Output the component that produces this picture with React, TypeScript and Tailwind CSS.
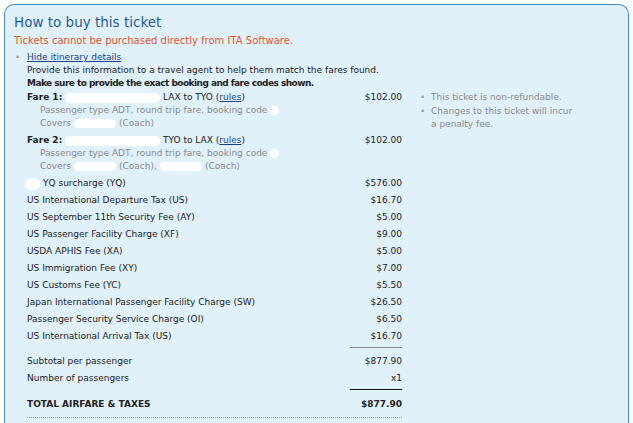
const font = { fontFamily: '"DejaVu Sans", Verdana, sans-serif' };

function Blob({ className }: { className: string }) {
  return <span className={`inline-block rounded-full bg-white align-middle ${className}`} />;
}

const taxes: [string, string][] = [
  ["US International Departure Tax (US)", "$16.70"],
  ["US September 11th Security Fee (AY)", "$5.00"],
  ["US Passenger Facility Charge (XF)", "$9.00"],
  ["USDA APHIS Fee (XA)", "$5.00"],
  ["US Immigration Fee (XY)", "$7.00"],
  ["US Customs Fee (YC)", "$5.50"],
  ["Japan International Passenger Facility Charge (SW)", "$26.50"],
  ["Passenger Security Service Charge (OI)", "$6.50"],
  ["US International Arrival Tax (US)", "$16.70"],
];

function Row({ label, amount, bold }: { label: React.ReactNode; amount: string; bold?: boolean }) {
  return (
    <div className={`flex h-[17px] items-center justify-between ${bold ? "font-bold" : ""}`}>
      <span>{label}</span>
      <span>{amount}</span>
    </div>
  );
}

export default function App() {
  return (
    <div className="h-[423px] w-[633px] overflow-hidden bg-white px-[4px] pt-[4px] text-[9px] text-[#222]" style={font}>
      <div className="h-[430px] rounded-t-[10px] border border-b-0 border-[#4a8ac6] bg-[#e1f1fa] pl-[9px] pt-[9px]">
        <h1 className="text-[13.5px] leading-[17px] text-[#1f5d9c]">How to buy this ticket</h1>
        <p className="mt-[3px] text-[10px] leading-[13px] text-[#e0572b]">Tickets cannot be purchased directly from ITA Software.</p>

        <div className="mt-[4px] flex items-center leading-[13px]">
          <span className="w-[13px] pl-[1px] text-[#999]">•</span>
          <a className="text-[#1a3e8c] underline">Hide itinerary details</a>
        </div>

        <div className="pl-[13px]">
          <p className="leading-[13px]">Provide this information to a travel agent to help them match the fares found.</p>
          <p className="font-bold leading-[13px] tracking-[-0.55px]">Make sure to provide the exact booking and fare codes shown.</p>

          <div className="mt-[1px] flex">
            <div className="w-[375px]">
              <div className="flex h-[13px] items-center justify-between">
                <span className="flex items-center">
                  <b className="w-[38px]">Fare 1:</b>
                  <Blob className="h-[10px] w-[95px]" />
                  <span className="ml-[3px]">LAX to TYO (<a className="text-[#1a3e8c] underline">rules</a>)</span>
                </span>
                <span>$102.00</span>
              </div>
              <div className="pl-[13px] leading-[13px] text-[#8a8a8a]">
                <div className="flex h-[13px] items-center">
                  Passenger type ADT, round trip fare, booking code
                  <Blob className="ml-[3px] h-[9px] w-[9px]" />
                </div>
                <div className="flex h-[13px] items-center">
                  Covers <Blob className="mx-[3px] h-[9px] w-[42px]" />(Coach)
                </div>
              </div>

              <div className="mt-[4px] flex h-[13px] items-center justify-between">
                <span className="flex items-center">
                  <b className="w-[38px]">Fare 2:</b>
                  <Blob className="h-[10px] w-[95px]" />
                  <span className="ml-[3px]">TYO to LAX (<a className="text-[#1a3e8c] underline">rules</a>)</span>
                </span>
                <span>$102.00</span>
              </div>
              <div className="pl-[13px] leading-[13px] text-[#8a8a8a]">
                <div className="flex h-[13px] items-center">
                  Passenger type ADT, round trip fare, booking code
                  <Blob className="ml-[3px] h-[9px] w-[9px]" />
                </div>
                <div className="flex h-[13px] items-center">
                  Covers <Blob className="mx-[3px] h-[9px] w-[42px]" />(Coach),
                  <Blob className="mx-[3px] h-[9px] w-[42px]" />(Coach)
                </div>
              </div>

              <div className="mt-[2px]">
                <Row
                  label={
                    <span className="flex items-center">
                      <Blob className="-ml-[2px] mr-[3px] h-[12px] w-[15px]" />YQ surcharge (YQ)
                    </span>
                  }
                  amount="$576.00"
                />
                {taxes.map(([l, a]) => (
                  <Row key={l} label={l} amount={a} />
                ))}
              </div>

              <div className="mt-[2px] flex justify-end">
                <div className="h-px w-[52px] bg-[#888]" />
              </div>
              <div className="mt-[5px]">
                <Row label="Subtotal per passenger" amount="$877.90" />
                <Row label="Number of passengers" amount="x1" />
              </div>
              <div className="mt-[2px] flex justify-end">
                <div className="h-px w-[52px] bg-[#111]" />
              </div>
              <div className="mt-[6px]">
                <Row label="TOTAL AIRFARE & TAXES" amount="$877.90" bold />
              </div>
              <div className="mt-[4px] border-t border-dotted border-[#999]" />
            </div>

            <ul className="ml-[18px] w-[155px] leading-[13.5px] text-[#8a8a8a]">
              <li className="flex">
                <span className="w-[11px] shrink-0 text-[#999]">•</span>
                <span>This ticket is non-refundable.</span>
              </li>
              <li className="flex">
                <span className="w-[11px] shrink-0 text-[#999]">•</span>
                <span>Changes to this ticket will incur a penalty fee.</span>
              </li>
            </ul>
          </div>
        </div>
      </div>
    </div>
  );
}
